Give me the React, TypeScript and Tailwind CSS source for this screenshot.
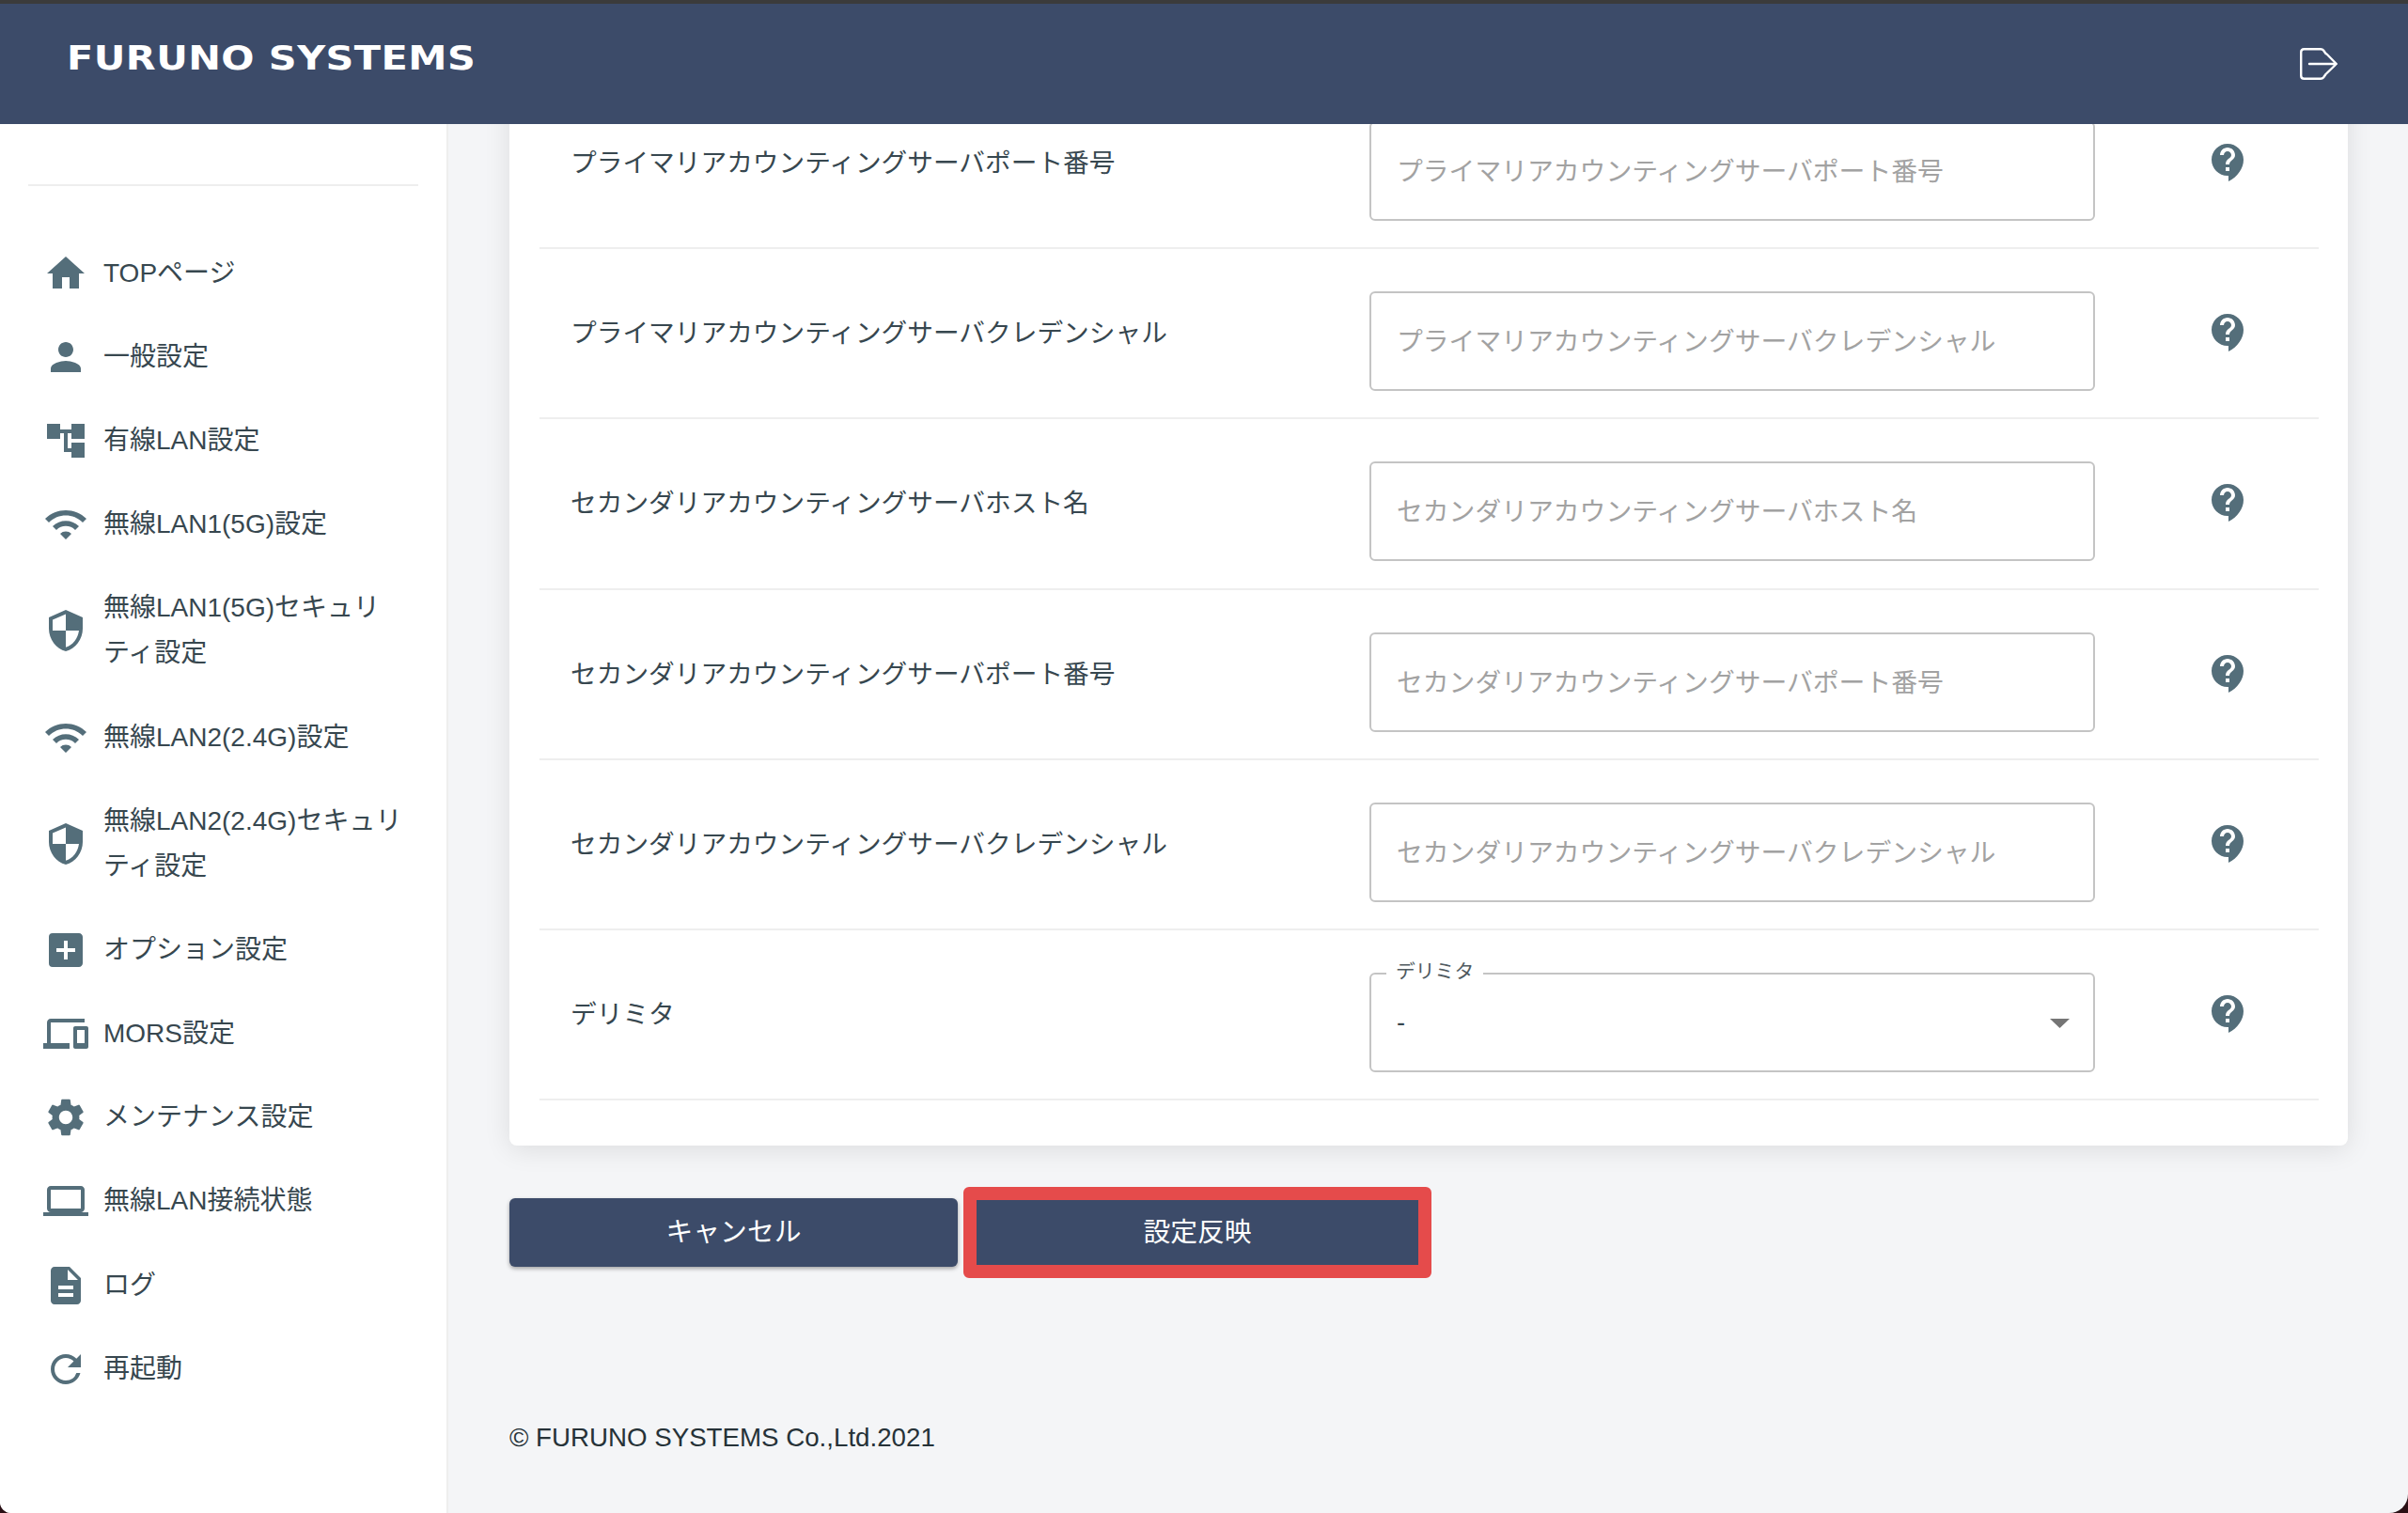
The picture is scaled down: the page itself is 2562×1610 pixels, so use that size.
import React from "react";
import {
  MdHome, MdPerson, MdAccountTree, MdWifi, MdSecurity, MdAddBox, MdDevices,
  MdSettings, MdLaptop, MdDescription, MdRefresh, MdContactSupport,
} from "react-icons/md";

const FONT = "font-['Liberation_Sans','Noto_Sans_CJK_JP',sans-serif]";

const nav: { icon: React.ComponentType<{ className?: string }>; label: string }[] = [
  { icon: MdHome, label: "TOPページ" },
  { icon: MdPerson, label: "一般設定" },
  { icon: MdAccountTree, label: "有線LAN設定" },
  { icon: MdWifi, label: "無線LAN1(5G)設定" },
  { icon: MdSecurity, label: "無線LAN1(5G)セキュリティ設定" },
  { icon: MdWifi, label: "無線LAN2(2.4G)設定" },
  { icon: MdSecurity, label: "無線LAN2(2.4G)セキュリティ設定" },
  { icon: MdAddBox, label: "オプション設定" },
  { icon: MdDevices, label: "MORS設定" },
  { icon: MdSettings, label: "メンテナンス設定" },
  { icon: MdLaptop, label: "無線LAN接続状態" },
  { icon: MdDescription, label: "ログ" },
  { icon: MdRefresh, label: "再起動" },
];

const rows = [
  "プライマリアカウンティングサーバポート番号",
  "プライマリアカウンティングサーバクレデンシャル",
  "セカンダリアカウンティングサーバホスト名",
  "セカンダリアカウンティングサーバポート番号",
  "セカンダリアカウンティングサーバクレデンシャル",
];

function Row({ label, children }: { label: string; children: React.ReactNode }) {
  return (
    <div className="flex h-[181.2px] border-b-2 border-[#eeeeee] pt-[45px]">
      <div className="w-[883px] shrink-0 pl-[33px] pt-[21px] text-[27.7px] leading-[48px] text-[#37474f]">{label}</div>
      <div className="w-[772px] shrink-0">{children}</div>
      <div className="w-[238px] shrink-0 pl-[118px] pt-[20px]">
        <MdContactSupport className="h-[48px] w-[48px] text-[#546e7a]" />
      </div>
    </div>
  );
}

export default function App() {
  return (
    <div className={`h-[1610px] w-[2562px] bg-[#2a1015] ${FONT}`}>
      <div className="flex h-full flex-col overflow-hidden rounded-bl-[12px] rounded-br-[20px] bg-[#f4f5f7]">
        <div className="h-[4px] shrink-0 bg-[#3b3b3b]" />
        <header className="relative z-10 flex h-[128px] shrink-0 items-start justify-between bg-[#3c4b69] pl-[71px] pr-[75px]">
          <div className="mt-[38px] origin-left scale-x-[1.15] text-[36px] font-bold leading-[40px] tracking-[0.4px] text-white whitespace-pre font-['DejaVu_Sans',sans-serif]">FURUNO SYSTEMS</div>
          <svg viewBox="0 0 40 34" className="mt-[47px] h-[34px] w-[40px]" fill="none" stroke="white" strokeWidth="2.4" strokeLinecap="round" strokeLinejoin="round">
            <path d="M27.5 6 L25 2.5 Q24 1.2 22 1.2 H4.5 Q1.2 1.2 1.2 4.5 V29.5 Q1.2 32.8 4.5 32.8 H22 Q24 32.8 25 31.5 L27.5 28" />
            <path d="M10 17 H38.5 M28.5 6.5 L38.8 17 L28.5 27" />
          </svg>
        </header>
        <div className="flex min-h-0 flex-1">
          <aside className="w-[477px] shrink-0 border-r-2 border-[#eeeeee] bg-white pl-[30px] pr-[30px]">
            <div className="mt-[64px] mb-[48px] h-[2px] bg-[#eeeeee]" />
            <nav className="flex flex-col">
              {nav.map((n) => (
                <div key={n.label} className="flex items-center py-[20.6px] pr-[14px]">
                  <n.icon className="ml-[16px] h-[48px] w-[48px] shrink-0 text-[#546e7a]" />
                  <div className="ml-[16px] text-[28px] leading-[48px] text-[#37474f]">{n.label}</div>
                </div>
              ))}
            </nav>
          </aside>
          <main className="flex min-w-0 flex-1 flex-col overflow-hidden pl-[65px] pr-[64px]">
            <div className="-mt-[48px] rounded-[8px] bg-white pb-[48px] shadow-[0_4px_28px_rgba(0,0,0,0.10)]">
              <div className="ml-[32px] mr-[31px]">
                {rows.map((r) => (
                  <Row key={r} label={r}>
                    <input
                      readOnly
                      placeholder={r}
                      className="h-[106px] w-full rounded-[6px] border-2 border-[#c4c4c4] bg-white px-[27px] pt-[2px] text-[27.8px] outline-none placeholder:text-[#a2a2a2]"
                    />
                  </Row>
                ))}
                <Row label="デリミタ">
                  <div className="relative flex h-[106px] items-center justify-between rounded-[6px] border-2 border-[#c4c4c4] pl-[27px] pr-[25px]">
                    <span className="absolute -top-[16px] left-[16px] bg-white px-[10px] text-[20.8px] leading-[26px] text-[#505a60]">デリミタ</span>
                    <span className="text-[27.2px] text-[#37474f]">-</span>
                    <svg viewBox="0 0 21 10" className="mt-[2px] h-[10px] w-[21px]"><path d="M0 0H21L10.5 10Z" fill="#757575" /></svg>
                  </div>
                </Row>
              </div>
            </div>
            <div className="mt-[44px] flex items-center">
              <button className="h-[73px] w-[477px] rounded-[6px] bg-[#3c4b69] text-[28.8px] text-white shadow-[0_2px_4px_rgba(0,0,0,0.35)]">キャンセル</button>
              <div className="ml-[6px] rounded-[6px] border-[14px] border-[#e54b4b]">
                <button className="block h-[69px] w-[470px] bg-[#3c4b69] text-[28.8px] text-white">設定反映</button>
              </div>
            </div>
            <div className="mt-[150px] text-[27.7px] leading-[40px] text-[#263238]">© FURUNO SYSTEMS Co.,Ltd.2021</div>
          </main>
        </div>
      </div>
    </div>
  );
}
